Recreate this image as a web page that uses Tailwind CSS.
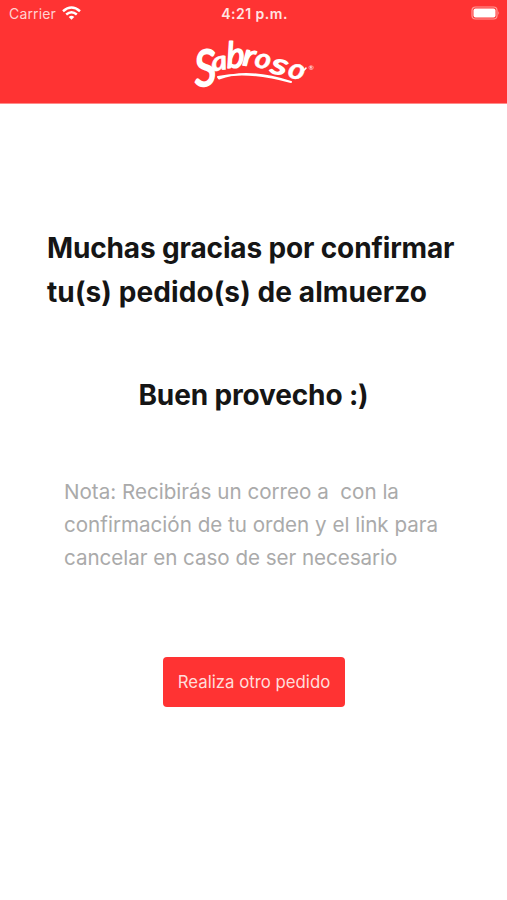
<!DOCTYPE html>
<html lang="es">
<head>
<meta charset="utf-8">
<title>Sabroso</title>
<script src="https://cdn.jsdelivr.net/npm/@tailwindcss/browser@4"></script>
</head>
<body class="min-h-[900px] overflow-hidden bg-white font-['Inter','Liberation_Sans',sans-serif]">
<header class="h-[104px] border-b border-[#ff8b89] bg-[#ff3333] text-white">
  <div class="grid h-7 grid-cols-3 items-center pl-[9px] pr-[7px]">
    <div class="-mt-[1px] flex items-center gap-[6px] text-[14px] text-[#ffd2d0]">
      <span class="tracking-[0.15px]">Carrier</span>
      <svg class="-mt-[2px] h-[14px] w-[19px]" viewBox="0 0 19 14" fill="none" stroke="#fff" stroke-width="2.5"><path d="M1 5.2Q9.500-2.100 18 5.200M4.200 8.500Q9.500 4 14.800 8.500"/><path d="M6.700 10.900Q9.500 8.800 12.300 10.900L9.500 13.800Z" fill="#fff" stroke="none"/></svg>
    </div>
    <span class="-mt-[1px] text-center text-[14px] font-semibold tracking-[0.5px] text-[#ffe5e3]">4:21 p.m.</span>
    <svg class="-mt-[2px] h-[14px] w-[30px] justify-self-end" viewBox="0 0 30 14"><rect x="2" y="1" width="25" height="12" rx="3.500" fill="none" stroke="#ff9b99" stroke-width="1.200"/><rect x="3.500" y="2.600" width="22" height="8.800" rx="2" fill="#fff"/><path d="M28.300 5Q30 7 28.300 9Z" fill="#ff9b99"/></svg>
  </div>
  <div class="flex justify-center">
    <svg class="h-[74px] w-[130px] overflow-visible" viewBox="189 28 130 74" role="img" aria-label="Sabroso" fill="#fff" font-family="Lato" font-style="italic" font-weight="700" stroke="#fff" stroke-linejoin="round" stroke-linecap="round">
      <text transform="translate(195.500 86.500) rotate(-4) scale(.86 1)" font-size="50" font-weight="400" stroke-width="1.900">S</text>
      <text transform="translate(212.500 71.500) rotate(-9) scale(1.140 1)" font-size="27" stroke-width=".5">a</text>
      <text transform="translate(227 68) rotate(-3) scale(.95 1)" font-size="36" font-weight="400" stroke-width="1.500">b</text>
      <text transform="translate(242 65) rotate(7) scale(1.200 1)" font-size="30" font-weight="400" stroke-width="1.400">r</text>
      <text transform="translate(253.500 66.800) rotate(10) scale(1.120 1)" font-size="28" stroke-width=".4">o</text>
      <text transform="translate(269.500 72) rotate(15) scale(1.400 1)" font-size="29" font-weight="400" stroke-width="1.400">s</text>
      <text transform="translate(286.500 76.500) rotate(16) scale(1.100 1)" font-size="29" stroke-width=".4">o</text>
      <path d="M219 78.500Q248 68 291 82Q248 70 218 77Z" stroke-width="2"/>
      <path d="M302 70Q304 71 306 68" fill="none" stroke-width="1.500"/>
      <text x="308.500" y="69.500" font-size="6.500" font-style="normal" font-weight="400" stroke="none">®</text>
    </svg>
  </div>
</header>
<main class="flex flex-col">
  <h1 class="mt-[122px] ml-[47px] whitespace-nowrap text-[28px] leading-[44px] font-bold text-[#151515]"><span class="tracking-[-0.14px]">Muchas gracias por confirmar</span><br><span class="tracking-[0.1px]">tu(s) pedido(s) de almuerzo</span></h1>
  <h2 class="mt-[59px] text-center text-[28px] leading-[44px] font-bold text-[#151515]"><span class="tracking-[-0.14px]">Buen provecho :)</span></h2>
  <p class="mt-[58px] ml-[64px] whitespace-pre text-[20.6px] leading-[33px] text-[#aaaaaa]"><span>Nota: Recibirás un correo a  con la</span><br><span>confirmación de tu orden y el link para</span><br><span class="tracking-[-0.04px]">cancelar en caso de ser necesario</span></p>
  <button class="mt-[83px] ml-[163px] h-[50px] w-[182px] rounded-[4px] bg-[#ff3333] pt-[2px] text-[16.8px] whitespace-nowrap text-[#ffdcda]"><span>Realiza otro pedido</span></button>
</main>
</body>
</html>
